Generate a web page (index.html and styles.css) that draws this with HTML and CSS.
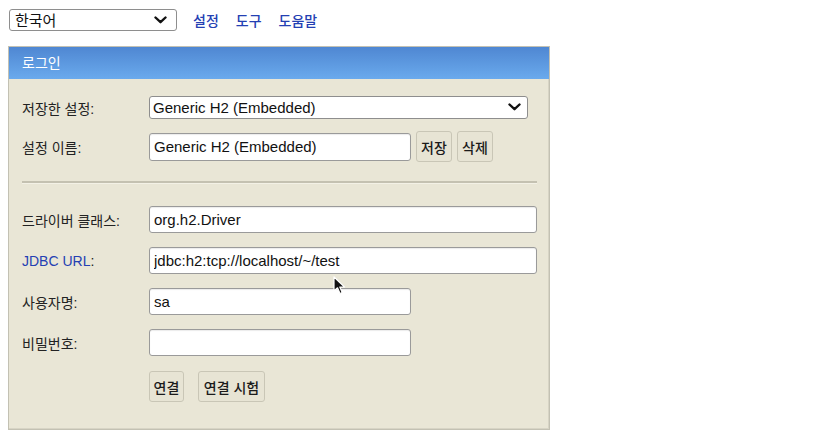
FILE: index.html
```html
<!DOCTYPE html>
<html lang="ko">
<head>
<meta charset="utf-8">
<title>H2 Console</title>
<link rel="stylesheet" href="styles.css">
</head>
<body>
<div class="topbar">
  <div class="selwrap lang">
    <select class="sel"><option>한국어</option></select>
    <svg class="chev" width="13" height="8" viewBox="0 0 13 8"><path d="M1.5 1.5 L6.5 6.2 L11.5 1.5" fill="none" stroke="#111" stroke-width="2.4" stroke-linecap="round" stroke-linejoin="round"/></svg>
  </div>
  <a class="toplink" href="#">설정</a>
  <a class="toplink" href="#">도구</a>
  <a class="toplink" href="#">도움말</a>
</div>

<div class="panel">
  <div class="panel-head">로그인</div>
  <div class="panel-body">
    <div class="row row-first">
      <label class="lbl">저장한 설정:</label>
      <div class="selwrap saved">
        <select class="sel"><option>Generic H2 (Embedded)</option></select>
        <svg class="chev" width="13" height="8" viewBox="0 0 13 8"><path d="M1.5 1.5 L6.5 6.2 L11.5 1.5" fill="none" stroke="#111" stroke-width="2.4" stroke-linecap="round" stroke-linejoin="round"/></svg>
      </div>
    </div>
    <div class="row row-name">
      <label class="lbl">설정 이름:</label>
      <input class="inp short" type="text" value="Generic H2 (Embedded)">
      <button class="btn">저장</button>
      <button class="btn">삭제</button>
    </div>
    <hr class="sep">
    <div class="row row-field">
      <label class="lbl">드라이버 클래스:</label>
      <input class="inp long" type="text" value="org.h2.Driver">
    </div>
    <div class="row row-field">
      <label class="lbl"><a class="lbl-link" href="#">JDBC URL</a>:</label>
      <input class="inp long" type="text" value="jdbc:h2:tcp://localhost/~/test">
    </div>
    <div class="row row-field">
      <label class="lbl">사용자명:</label>
      <input class="inp short" type="text" value="sa">
    </div>
    <div class="row row-field">
      <label class="lbl">비밀번호:</label>
      <input class="inp short" type="password" value="">
    </div>
    <div class="row row-actions">
      <span class="lbl"></span>
      <button class="btn btn-connect">연결</button>
      <button class="btn btn-test">연결 시험</button>
    </div>
  </div>
</div>

<svg class="cursor" width="14" height="20" viewBox="0 0 14 20"><path d="M1 1 L1 15 L4.5 11.8 L7 17.5 L9.2 16.5 L6.8 11 L11.5 11 Z" fill="#111" stroke="#fff" stroke-width="1.2" stroke-linejoin="round"/></svg>
</body>
</html>
```

FILE: styles.css
```css
html, body {
  margin: 0;
  padding: 0;
  background: #ffffff;
}
body {
  font-family: "Liberation Sans", "Noto Sans CJK KR", sans-serif;
  color: #1e1e1e;
  font-size: 14px;
  position: relative;
  width: 823px;
  height: 447px;
  overflow: hidden;
}
.topbar {
  display: flex;
  align-items: center;
  height: 22px;
  padding: 9px 0 0 9px;
}
.selwrap {
  position: relative;
  display: inline-block;
}
.sel {
  -webkit-appearance: none;
  appearance: none;
  box-sizing: border-box;
  height: 22px;
  margin: 0;
  padding: 0 24px 0 4px;
  border: 1px solid #8e8e8e;
  border-radius: 3px;
  background: #ffffff;
  font-family: "Liberation Sans", "Noto Sans CJK KR", sans-serif;
  font-size: 14px;
  color: #111;
  width: 100%;
}
.chev {
  position: absolute;
  right: 7px;
  top: 7px;
  pointer-events: none;
}
.lang {
  width: 168px;
}
.lang .sel {
  font-size: 15px;
  padding-left: 5px;
}
.lang .chev {
  right: 10px;
}
.toplink {
  color: #2440b3;
  text-decoration: none;
  font-size: 14px;
  font-weight: 500;
  margin-left: 17px;
  font-family: "Noto Sans CJK KR", sans-serif;
}
.lang + .toplink {
  margin-left: 16px;
}
.panel {
  margin: 15px 0 0 8px;
  width: 542px;
  box-sizing: border-box;
  border: 1px solid #c3c1b3;
  background: #e9e6d6;
  box-shadow: inset -1px -1px 0 #d7d4c5;
}
.panel-head {
  height: 32px;
  line-height: 31px;
  padding-left: 13px;
  color: #ffffff;
  font-size: 14px;
  font-family: "Noto Sans CJK KR", sans-serif;
  background: linear-gradient(#4f87d2, #6aaaed);
}
.panel-body {
  padding: 17px 12px 27px 13px;
}
.row {
  display: flex;
  align-items: center;
}
.lbl {
  width: 127px;
  flex: none;
  font-size: 14px;
  color: #222;
}
.lbl-link {
  color: #2440b3;
  text-decoration: none;
}
.row-first {
  height: 23px;
}
.saved {
  width: 379px;
}
.saved .sel {
  height: 23px;
  font-size: 15px;
  padding-left: 3px;
}
.row-name {
  margin-top: 12px;
  height: 31px;
}
.inp {
  box-sizing: border-box;
  height: 28px;
  margin: 0;
  padding: 0 4px;
  border: 1px solid #9a9a9a;
  border-radius: 3px;
  background: #ffffff;
  font-family: "Liberation Sans", "Noto Sans CJK KR", sans-serif;
  font-size: 15px;
  color: #111;
  box-shadow: inset 0 1px 1px rgba(0,0,0,0.08);
}
.short {
  width: 262px;
}
.long {
  width: 389px;
}
.btn {
  box-sizing: border-box;
  height: 31px;
  margin: 0 0 0 5px;
  padding: 0 4px;
  border: 1px solid #c9c6b6;
  border-radius: 3px;
  background: #e7e4d4;
  font-family: "Noto Sans CJK KR", sans-serif;
  font-size: 14px;
  color: #1b1b1b;
  font-weight: 500;
}
.row-name .btn {
  width: 36px;
  padding: 0;
}
.sep {
  margin: 19px 0 0 0;
  width: 515px;
  height: 2px;
  border: none;
  background: #c4c1b1;
  border-bottom: 1px solid #f3f1e6;
}
.row-field {
  margin-top: 14px;
  height: 27px;
}
.row-field .inp {
  height: 27px;
}
.sep + .row-field {
  margin-top: 22px;
}
.row-actions {
  margin-top: 15px;
  height: 31px;
}
.row-actions .btn:first-of-type {
  margin-left: 0;
}
.btn-connect {
  width: 35px;
  padding: 0;
}
.btn-test {
  margin-left: 14px;
  width: 67px;
  padding: 0;
}
.cursor {
  position: absolute;
  left: 333px;
  top: 276px;
}
```
